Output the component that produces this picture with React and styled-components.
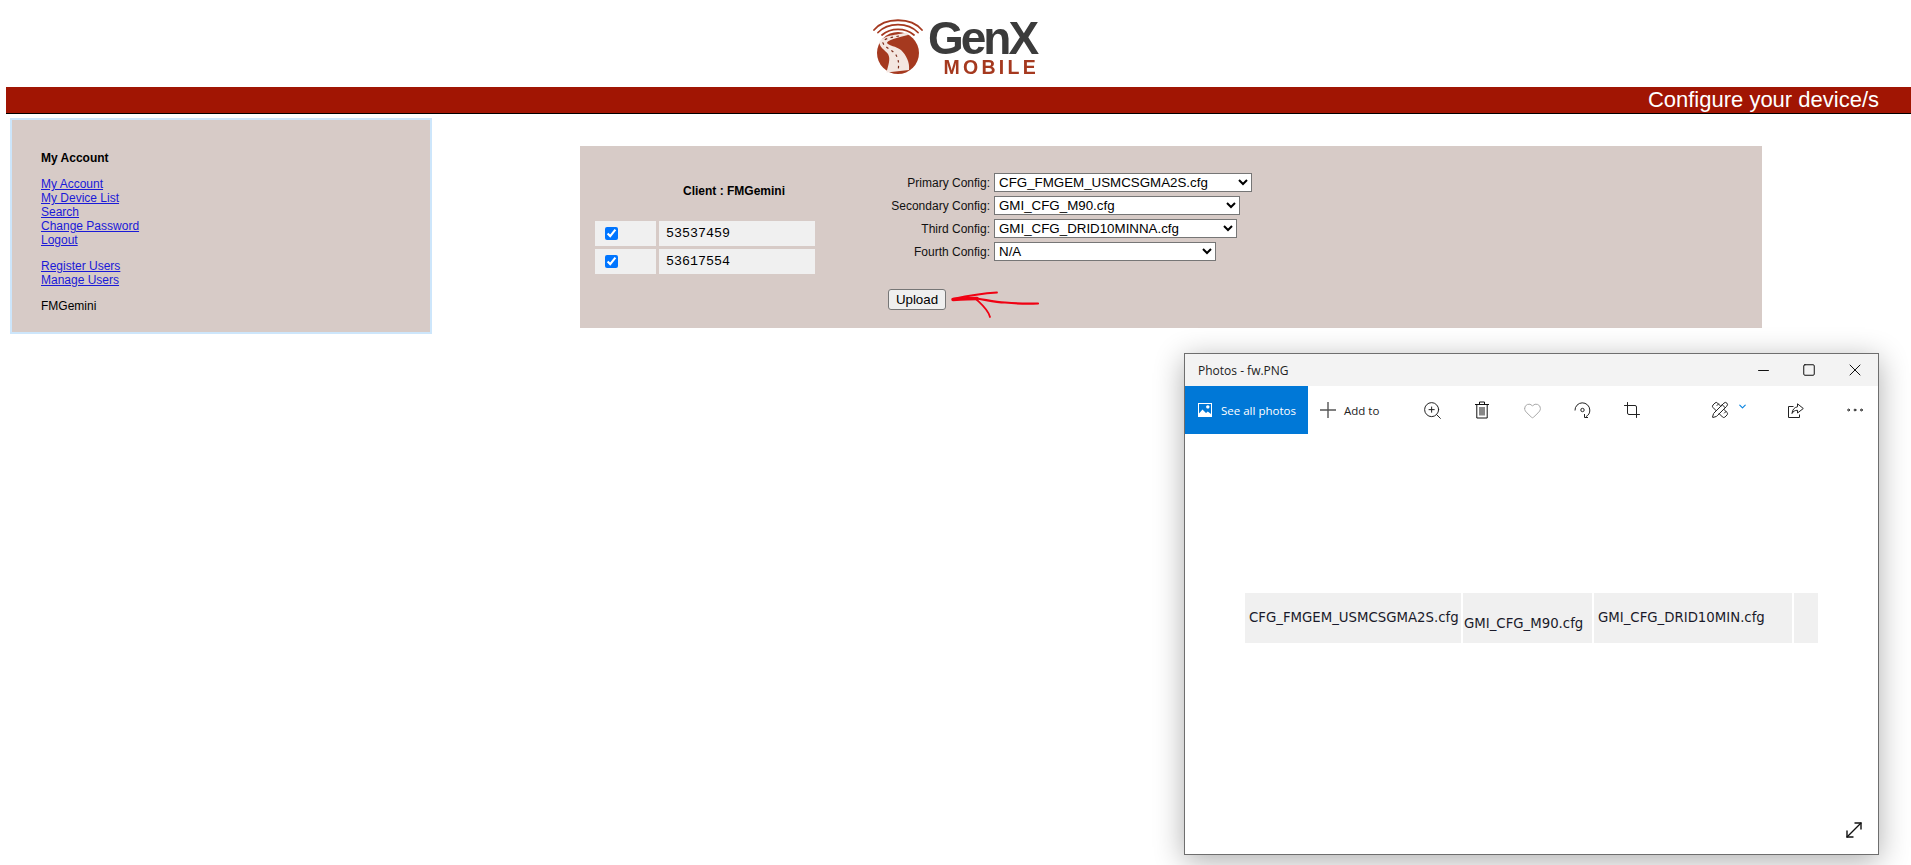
import React from 'react'
import styled, { createGlobalStyle } from 'styled-components'
import { ZoomIn, Heart, Crop, PencilRuler, ChevronDown, Ellipsis, Minus, Square, X, MoveDiagonal } from 'lucide-react'

const Global = createGlobalStyle`
  html, body {
    margin: 0;
    background: #fff;
    font-family: "Liberation Sans", Arial, sans-serif;
    font-size: 12px;
    color: #000;
    overflow: hidden;
  }
`
const Page = styled.div`
  position: relative;
  width: 1911px;
  height: 865px;
`
const Header = styled.header`
  height: 87px;
  display: flex;
  justify-content: center;
  padding: 18px 2px 0 0;
  box-sizing: border-box;
`
const Logo = styled.div`
  display: flex;
  gap: 5px;
  height: 58px;
  filter: blur(0.35px);
`
const Brand = styled.div`
  display: flex;
  flex-direction: column;
  align-items: flex-end;
`
const BrandName = styled.div`
  font-size: 46px;
  font-weight: 700;
  line-height: 41px;
  letter-spacing: -3px;
  color: #3b3b3b;
`
const BrandSub = styled.div`
  font-size: 19.5px;
  font-weight: 700;
  line-height: 17px;
  letter-spacing: 3.3px;
  margin-right: -3px;
  color: #a5391f;
`
const TitleBar = styled.div`
  margin-left: 6px;
  height: 26px;
  background: #a11503;
  border-bottom: 1px solid #000;
  color: #fff;
  font-size: 22px;
  line-height: 26px;
  text-align: right;
  padding-right: 32px;
`
const Main = styled.main`
  display: flex;
  align-items: flex-start;
  padding: 4px 0 0 10px;
`
const Sidebar = styled.aside`
  width: 422px;
  height: 216px;
  box-sizing: border-box;
  background: #d7cbc7;
  border: 2px solid #cde6fb;
  padding: 31px 0 0 29px;
  line-height: 14px;
`
const SideTitle = styled.div`
  font-weight: 700;
  margin-bottom: 12px;
`
const SideGroup = styled.div`
  display: flex;
  flex-direction: column;
  align-items: flex-start;
  margin-bottom: 12px;
`
const SideLink = styled.a`
  color: #1a1ad8;
  text-decoration: underline;
`
const Panel = styled.section`
  width: 1182px;
  height: 182px;
  margin: 28px 0 0 148px;
  background: #d7cbc7;
  display: flex;
`
const Devices = styled.div`
  width: 220px;
  padding: 35px 0 0 15px;
`
const ClientName = styled.div`
  font-weight: 700;
  line-height: 20px;
  margin-bottom: 20px;
  padding-left: 88px;
`
const DeviceGrid = styled.div`
  display: grid;
  grid-template-columns: 61px 156px;
  grid-auto-rows: 25px;
  gap: 3px;
`
const Cell = styled.div`
  background: #f0f0f0;
  display: flex;
  align-items: center;
  padding-left: ${(p) => p.$pad}px;
  font-family: "Liberation Mono", monospace;
  font-size: 13.33px;
  input { margin: 0; width: 13px; height: 13px; }
`
const Configs = styled.div`
  padding-top: 27px;
`
const ConfigGrid = styled.div`
  display: grid;
  grid-template-columns: 175px auto;
  grid-auto-rows: 19px;
  column-gap: 4px;
  row-gap: 4px;
  align-items: center;
  justify-items: start;
`
const ConfigLabel = styled.label`
  justify-self: end;
  color: #111;
`
const ConfigSelect = styled.select`
  width: ${(p) => p.$w}px;
  height: 19px;
  box-sizing: border-box;
  font-family: "Liberation Sans", Arial, sans-serif;
  font-size: 13.33px;
  background: #fff;
`
const Actions = styled.div`
  display: flex;
  align-items: flex-start;
  margin: 28px 0 0 73px;
`
const UploadButton = styled.button`
  width: 58px;
  height: 21px;
  padding: 0;
  font-family: "Liberation Sans", Arial, sans-serif;
  font-size: 13.33px;
  background: #efefef;
  border: 1px solid #767676;
  border-radius: 3px;
`
const Scribble = styled.svg`
  width: 92px;
  height: 32px;
  margin: 3px 0 0 5px;
  overflow: visible;
`

/* Photos app window floating over the page */
const PhotosWindow = styled.div`
  position: absolute;
  left: 1184px;
  top: 353px;
  width: 695px;
  height: 502px;
  box-sizing: border-box;
  background: #fff;
  border: 1px solid #6e6e6e;
  box-shadow: 0 6px 28px rgba(0, 0, 0, 0.32);
  font-family: "Open Sans", "Noto Sans", sans-serif;
  display: flex;
  flex-direction: column;
`
const WinTitle = styled.div`
  height: 32px;
  flex: none;
  background: #f3f3f3;
  display: flex;
  align-items: center;
  justify-content: space-between;
  padding-left: 13px;
  font-size: 12px;
  color: #222;
`
const WinControls = styled.div`
  display: flex;
`
const WinControl = styled.div`
  width: 46px;
  height: 32px;
  display: flex;
  align-items: center;
  justify-content: center;
  color: #111;
`
const Toolbar = styled.div`
  height: 48px;
  flex: none;
  display: flex;
  align-items: center;
`
const SeeAll = styled.div`
  width: 123px;
  height: 48px;
  background: #0078d7;
  color: #fff;
  display: flex;
  align-items: center;
  gap: 9px;
  padding-left: 13px;
  box-sizing: border-box;
  font-size: 11.5px;
`
const AddTo = styled.div`
  width: 99px;
  display: flex;
  align-items: center;
  gap: 8px;
  padding-left: 12px;
  box-sizing: border-box;
  font-size: 11.5px;
  color: #222;
`
const ToolIcon = styled.div`
  width: ${(p) => p.$w || 50}px;
  margin-right: ${(p) => p.$after || 0}px;
  display: flex;
  align-items: center;
  justify-content: center;
  color: ${(p) => p.$color || '#222'};
`
const ToolSpacer = styled.div`
  flex: 1;
`
const EditChevron = styled.span`
  display: flex;
  color: #0a84e0;
  margin: -7px 0 0 8px;
`
const Canvas = styled.div`
  flex: 1;
  padding: 159px 0 0 60px;
`
const Strip = styled.div`
  display: flex;
  gap: 2px;
  height: 50px;
  font-family: "DejaVu Sans", sans-serif;
  font-size: 13.3px;
  line-height: 16px;
  color: #1a1a2a;
`
const StripCell = styled.div`
  width: ${(p) => p.$w}px;
  background: #f0f0f0;
  padding: ${(p) => p.$top}px 0 0 ${(p) => p.$left}px;
  box-sizing: border-box;
  white-space: nowrap;
`
const Expand = styled.div`
  position: absolute;
  right: 12px;
  bottom: 12px;
  display: flex;
  color: #111;
`

const ImageGlyph = () => (
  <svg width="14" height="14" viewBox="0 0 14 14">
    <path fill="#fff" fillRule="evenodd" d="M0 0h14v14H0zM9.8 2.2a1.7 1.7 0 1 0 .01 0zM1 10.5 4.5 6.5 8 10 9.8 8.6 13 11V1H1z" />
  </svg>
)

const PlusGlyph = () => (
  <svg width="16" height="16" viewBox="0 0 16 16" fill="none" stroke="#555" strokeWidth="1.4">
    <path d="M8 0v16M0 8h16" />
  </svg>
)

const TrashGlyph = () => (
  <svg width="14" height="18" viewBox="0 0 14 18" fill="none" stroke="#111" strokeWidth="1">
    <path d="M0 3.5h14M4.5 3.5V1h5v2.5M1.8 3.5v13.5h10.4V3.5M5 6v8.5M7 6v8.5M9 6v8.5" />
  </svg>
)

const RotateGlyph = () => (
  <svg width="17" height="17" viewBox="0 0 17 17" fill="none" stroke="#222" strokeWidth="1">
    <path d="M1 8.5A7.2 7.2 0 0 1 15.8 8c.2 3-1.4 5.4-3.8 6.6" />
    <circle cx="8.5" cy="8" r="1.7" />
    <path d="M10.5 12v3.5h3.5" />
  </svg>
)

const ShareGlyph = () => (
  <svg width="16" height="15" viewBox="0 0 16 15" fill="none" stroke="#222" strokeWidth="1">
    <path d="M5.5 3.5H.5v11h11v-3" />
    <path d="M9.5.8 15.3 5.5 9.5 10V7.3C7 7.2 5 8.4 4 10.500c.3-3.700 2.400-6.300 5.500-6.700z" />
  </svg>
)

const LogoMark = () => (
  <svg width="50" height="56" viewBox="0 0 50 56">
    <g fill="none" stroke="#a5391f" strokeLinecap="round">
      <path d="M1 12C12 -1 38 -1 49 12" strokeWidth="1.800" />
      <path d="M5 14.500C15 4 35 4 45 14.500" strokeWidth="1.800" />
      <path d="M9 17C18 9.500 32 9.500 41 17" strokeWidth="1.800" />
    </g>
    <circle cx="25" cy="35" r="21" fill="#a5391f" />
    <path fill="#f4e6e0" d="M34 14.500C24 17 10 17 6.500 24C6 29 12 32 15 36C18 41 15 48 13.500 54.500L36 52C37 44 33 37 28 32C23 28 16 28 14 25C14 22 24 20 35 17Z" />
    <path fill="none" stroke="#7a2a18" strokeWidth="1.200" strokeDasharray="2.500 3.500" d="M26 18C16 20 9 21 10 25C12 30 20 32 23 37C26 42 26 47 25 53" />
  </svg>
)

const devices = ['53537459', '53617554']
const configs = [
  { label: 'Primary Config:', value: 'CFG_FMGEM_USMCSGMA2S.cfg', w: 258 },
  { label: 'Secondary Config:', value: 'GMI_CFG_M90.cfg', w: 246 },
  { label: 'Third Config:', value: 'GMI_CFG_DRID10MINNA.cfg', w: 243 },
  { label: 'Fourth Config:', value: 'N/A', w: 222 },
]
const thin = { strokeWidth: 1, absoluteStrokeWidth: true }

const App = () => (
  <Page>
    <Global />
    <Header>
      <Logo>
        <LogoMark />
        <Brand>
          <BrandName>GenX</BrandName>
          <BrandSub>MOBILE</BrandSub>
        </Brand>
      </Logo>
    </Header>
    <TitleBar>Configure your device/s</TitleBar>
    <Main>
      <Sidebar>
        <SideTitle>My Account</SideTitle>
        <SideGroup>
          <SideLink href="#">My Account</SideLink>
          <SideLink href="#">My Device List</SideLink>
          <SideLink href="#">Search</SideLink>
          <SideLink href="#">Change Password</SideLink>
          <SideLink href="#">Logout</SideLink>
        </SideGroup>
        <SideGroup>
          <SideLink href="#">Register Users</SideLink>
          <SideLink href="#">Manage Users</SideLink>
        </SideGroup>
        <div>FMGemini</div>
      </Sidebar>
      <Panel>
        <Devices>
          <ClientName>Client : FMGemini</ClientName>
          <DeviceGrid>
            {devices.map((d) => (
              <React.Fragment key={d}>
                <Cell $pad={10}><input type="checkbox" defaultChecked /></Cell>
                <Cell $pad={7}>{d}</Cell>
              </React.Fragment>
            ))}
          </DeviceGrid>
        </Devices>
        <Configs>
          <ConfigGrid>
            {configs.map((c) => (
              <React.Fragment key={c.label}>
                <ConfigLabel>{c.label}</ConfigLabel>
                <ConfigSelect $w={c.w} defaultValue={c.value}>
                  <option>{c.value}</option>
                </ConfigSelect>
              </React.Fragment>
            ))}
          </ConfigGrid>
          <Actions>
            <UploadButton>Upload</UploadButton>
            <Scribble viewBox="0 0 92 32" fill="none" stroke="#f00112" strokeLinecap="round">
              <path strokeWidth="3.500" d="M2 7.500C10 7 18 6.500 26 6.500" />
              <path strokeWidth="2.200" d="M26 6.500C36 8 44 10.500 54 10.500c10 1 20 1.500 33 1" />
              <path strokeWidth="1.800" d="M2 7C16 4 30 1.500 46 0.500" />
              <path strokeWidth="1.800" d="M25 7c4 4 12 10 14 18" />
            </Scribble>
          </Actions>
        </Configs>
      </Panel>
    </Main>

    <PhotosWindow>
      <WinTitle>
        Photos - fw.PNG
        <WinControls>
          <WinControl><Minus size={17} {...thin} /></WinControl>
          <WinControl><Square size={14} {...thin} /></WinControl>
          <WinControl><X size={20} {...thin} /></WinControl>
        </WinControls>
      </WinTitle>
      <Toolbar>
        <SeeAll><ImageGlyph />See all photos</SeeAll>
        <AddTo><PlusGlyph />Add to</AddTo>
        <ToolIcon><ZoomIn size={21} {...thin} /></ToolIcon>
        <ToolIcon><TrashGlyph /></ToolIcon>
        <ToolIcon $color="#aaa"><Heart size={19} {...thin} /></ToolIcon>
        <ToolIcon><RotateGlyph /></ToolIcon>
        <ToolIcon><Crop size={18} {...thin} /></ToolIcon>
        <ToolSpacer />
        <ToolIcon $w={62} $after={11}>
          <PencilRuler size={18} {...thin} />
          <EditChevron><ChevronDown size={11} strokeWidth={2.5} /></EditChevron>
        </ToolIcon>
        <ToolIcon $after={11}><ShareGlyph /></ToolIcon>
        <ToolIcon $w={46}><Ellipsis size={22} {...thin} /></ToolIcon>
      </Toolbar>
      <Canvas>
        <Strip>
          <StripCell $w={216} $top={17} $left={4}>CFG_FMGEM_USMCSGMA2S.cfg</StripCell>
          <StripCell $w={129} $top={23} $left={1}>GMI_CFG_M90.cfg</StripCell>
          <StripCell $w={198} $top={17} $left={4}>GMI_CFG_DRID10MIN.cfg</StripCell>
          <StripCell $w={24} $top={0} $left={0} />
        </Strip>
      </Canvas>
      <Expand><MoveDiagonal size={24} strokeWidth={1.4} /></Expand>
    </PhotosWindow>
  </Page>
)

export default App
